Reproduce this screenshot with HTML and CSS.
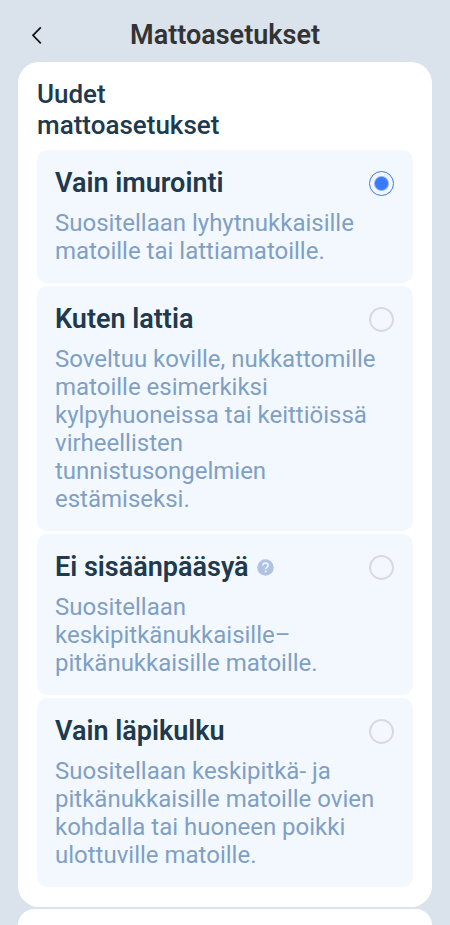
FILE: index.html
```html
<!DOCTYPE html>
<html lang="fi">
<head>
<meta charset="utf-8">
<meta name="viewport" content="width=device-width, initial-scale=1">
<title>Mattoasetukset</title>
<link rel="stylesheet" href="styles.css">
</head>
<body>
<header class="topbar">
  <button class="back" type="button" aria-label="Takaisin">
    <svg width="12" height="20" viewBox="0 0 12 20" fill="none" stroke="#111" stroke-width="1.7"><path d="M10.8 2.3 L3 10.3 L10.8 18.3"/></svg>
  </button>
  <h1 class="title">Mattoasetukset</h1>
</header>
<main>
  <section class="card">
    <h2 class="heading">Uudet mattoasetukset</h2>
    <div class="options">
      <div class="option">
        <div class="row">
          <label class="name" for="vacuum">Vain imurointi</label>
          <input class="radio" type="radio" name="carpet" id="vacuum" checked>
        </div>
        <p class="desc">Suositellaan lyhytnukkaisille matoille tai lattiamatoille.</p>
      </div>
      <div class="option">
        <div class="row">
          <label class="name" for="floor">Kuten lattia</label>
          <input class="radio" type="radio" name="carpet" id="floor">
        </div>
        <p class="desc">Soveltuu koville, nukkattomille matoille esimerkiksi kylpyhuoneissa tai keittiöissä virheellisten tunnistusongelmien estämiseksi.</p>
      </div>
      <div class="option">
        <div class="row">
          <label class="name" for="avoid">Ei sisäänpääsyä</label>
          <button class="help" type="button" aria-label="Ohje">
            <svg width="17" height="17" viewBox="0 0 17 17"><circle cx="8.5" cy="8.5" r="8.3" fill="#b0c4e2"/><path d="M5.9 6.6C5.9 5 7 4 8.5 4s2.6 1 2.6 2.4c0 1.8-2.5 2-2.5 3.9" fill="none" stroke="#f3f8ff" stroke-width="1.5"/><circle cx="8.6" cy="12.4" r="0.95" fill="#f3f8ff"/></svg>
          </button>
          <input class="radio" type="radio" name="carpet" id="avoid">
        </div>
        <p class="desc">Suositellaan keskipitkänukkaisille–pitkänukkaisille matoille.</p>
      </div>
      <div class="option">
        <div class="row">
          <label class="name" for="cross">Vain läpikulku</label>
          <input class="radio" type="radio" name="carpet" id="cross">
        </div>
        <p class="desc">Suositellaan keskipitkä- ja pitkänukkaisille matoille ovien kohdalla tai huoneen poikki ulottuville matoille.</p>
      </div>
    </div>
  </section>
  <section class="card next"></section>
</main>
</body>
</html>
```
FILE: styles.css
```css
* {
  box-sizing: border-box;
}

html {
  height: 100%;
}

body {
  display: flex;
  flex-direction: column;
  height: 100%;
  margin: 0;
  overflow: hidden;
  background: #dae2ec;
  color: #20394d;
  font-family: Roboto, sans-serif;
}

h1, h2, p {
  margin: 0;
}

button {
  display: flex;
  padding: 0;
  border: 0;
  background: none;
}

.topbar {
  display: grid;
  grid-template-columns: 32px 1fr 32px;
  align-items: center;
  padding: 18px 18px 10px;
}

.back {
  justify-content: center;
  width: 36px;
}

.title {
  color: #333;
  font-size: 27px;
  font-weight: 600;
  line-height: 34px;
  text-align: center;
}

main {
  display: flex;
  flex: 1;
  flex-direction: column;
  gap: 2px;
  min-height: 0;
  padding: 0 18px;
}

.card {
  flex: none;
  padding: 17px 19px 20px;
  border-radius: 21px;
  background: #fff;
}

.next {
  flex: 1;
  min-height: 0;
  padding: 0;
  border-radius: 21px 21px 0 0;
}

.heading {
  max-width: 60%;
  margin-bottom: 9px;
  font-size: 26px;
  font-weight: 500;
  line-height: 31px;
}

.options {
  display: flex;
  flex-direction: column;
  gap: 3px;
}

.option {
  padding: 18px 19px 18px 18px;
  border-radius: 10px;
  background: #f3f8ff;
}

.row {
  display: flex;
  align-items: center;
  gap: 8px;
  margin-bottom: 10px;
}

.name {
  font-size: 27px;
  font-weight: 600;
  line-height: 31px;
}

.radio {
  width: 25px;
  height: 25px;
  margin: 0 0 0 auto;
  border: 2px solid #d8dadd;
  border-radius: 50%;
  appearance: none;
}

.radio:checked {
  border: 1px solid #3a7af8;
  background: radial-gradient(circle, #3a7af8 0 6px, transparent 8px);
}

.desc {
  color: #7f9fc5;
  font-size: 24px;
  line-height: 28px;
}
```
